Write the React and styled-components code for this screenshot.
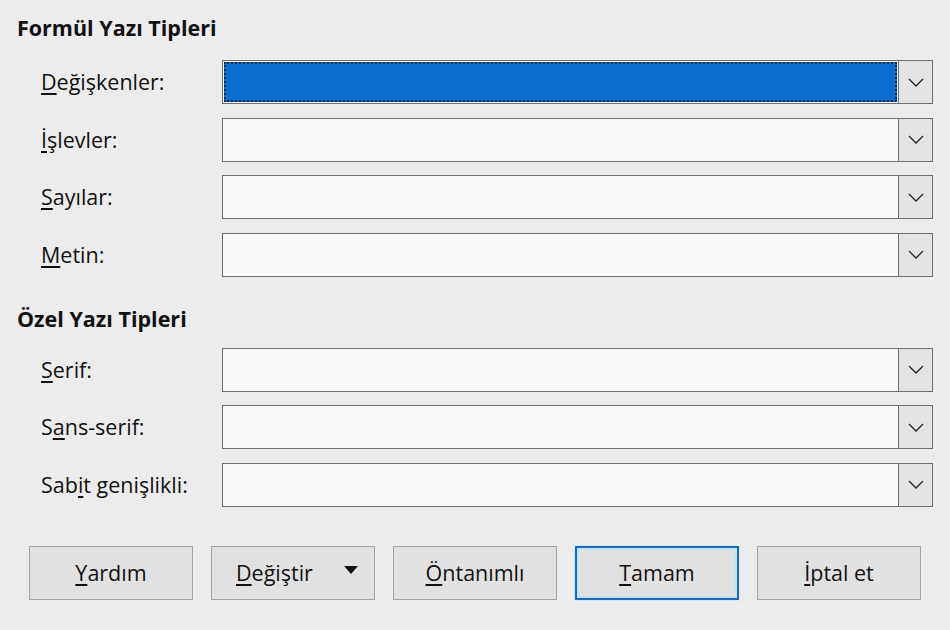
import React from "react";
import styled, { createGlobalStyle } from "styled-components";

const GlobalStyle = createGlobalStyle`
  html, body {
    margin: 0;
    padding: 0;
    background: #ececec;
  }
  body {
    font-family: "Open Sans", "Noto Sans", sans-serif;
    color: #111;
  }
`;

const formulFields = [
  { pre: "", key: "D", post: "eğişkenler:", focused: true },
  { pre: "", key: "İ", post: "şlevler:" },
  { pre: "", key: "S", post: "ayılar:" },
  { pre: "", key: "M", post: "etin:" },
];

const customFields = [
  { pre: "", key: "S", post: "erif:" },
  { pre: "S", key: "a", post: "ns-serif:" },
  { pre: "Sab", key: "i", post: "t genişlikli:" },
];

const buttons = [
  { pre: "", key: "Y", post: "ardım" },
  { pre: "", key: "D", post: "eğiştir", menu: true },
  { pre: "", key: "Ö", post: "ntanımlı" },
  { pre: "", key: "T", post: "amam", primary: true },
  { pre: "", key: "İ", post: "ptal et" },
];

const Mnemonic = ({ item }) => (
  <>
    {item.pre}
    <u>{item.key}</u>
    {item.post}
  </>
);

const Chevron = () => (
  <svg width="16" height="9" viewBox="0 0 16 9">
    <path d="M1 1 L8 8 L15 1" fill="none" stroke="#222" strokeWidth="1.3" />
  </svg>
);

const Section = ({ title, fields, gap }) => (
  <Group>
    <Heading $gap={gap}>{title}</Heading>
    <Rows>
      {fields.map((f, i) => (
        <Row key={i}>
          <Label>
            <Mnemonic item={f} />
          </Label>
          <Combo>
            <Field $focused={f.focused} />
            <DropButton>
              <Chevron />
            </DropButton>
          </Combo>
        </Row>
      ))}
    </Rows>
  </Group>
);

const App = () => {
  return (
    <>
      <GlobalStyle />
      <Dialog>
        <Section title="Formül Yazı Tipleri" fields={formulFields} gap={18} />
        <Section title="Özel Yazı Tipleri" fields={customFields} gap={15} />
        <ButtonBar>
          {buttons.map((b, i) => (
            <Button key={i} $primary={b.primary} $menu={b.menu}>
              <span>
                <Mnemonic item={b} />
              </span>
              {b.menu && <MenuArrow />}
            </Button>
          ))}
        </ButtonBar>
      </Dialog>
    </>
  );
};

export default App;

const Dialog = styled.div`
  width: 950px;
  height: 630px;
  box-sizing: border-box;
  padding: 14px 17px 0 17px;
  background: #ececec;
  display: flex;
  flex-direction: column;
`;

const Group = styled.div`
  display: flex;
  flex-direction: column;
  & + & {
    margin-top: 28px;
  }
`;

const Heading = styled.div`
  font-size: 21.5px;
  font-weight: 700;
  line-height: 28px;
  letter-spacing: 0;
  margin-bottom: ${(p) => p.$gap}px;
`;

const Rows = styled.div`
  display: flex;
  flex-direction: column;
  gap: 13.5px;
`;

const Row = styled.div`
  display: grid;
  grid-template-columns: 205px 1fr;
  align-items: center;
`;

const Label = styled.div`
  padding-left: 24px;
  font-size: 21.5px;
  line-height: 28px;
  white-space: nowrap;
  u {
    text-underline-offset: 3px;
  }
`;

const Combo = styled.div`
  height: 44px;
  display: flex;
  box-sizing: border-box;
  border: 1.5px solid #6e6e6e;
  background: #fafafa;
`;

const Field = styled.div`
  flex: 1;
  margin: 1px;
  box-sizing: border-box;
  background: ${(p) => (p.$focused ? "#0a6fd1" : "#fafafa")};
  border: ${(p) => (p.$focused ? "2px dotted #14263c" : "none")};
`;

const DropButton = styled.div`
  width: 33px;
  display: flex;
  align-items: center;
  justify-content: center;
  background: #e4e4e4;
  border-left: 1.5px solid #6e6e6e;
`;

const ButtonBar = styled.div`
  display: flex;
  gap: 18px;
  padding-left: 12px;
  margin-top: 39px;
`;

const Button = styled.div`
  width: 164px;
  height: 54px;
  box-sizing: border-box;
  display: flex;
  align-items: center;
  justify-content: ${(p) => (p.$menu ? "space-between" : "center")};
  padding: ${(p) => (p.$menu ? "0 16px 0 24px" : "0")};
  font-size: 21.5px;
  background: #e1e1e1;
  border: ${(p) => (p.$primary ? "2px solid #1f69b8" : "1.5px solid #a3a3a3")};
  box-shadow: ${(p) =>
    p.$primary ? "inset 0 0 0 2px #bfe3f7, 0 0 0 1px #cde9f8" : "none"};
  u {
    text-underline-offset: 3px;
  }
`;

const MenuArrow = styled.span`
  width: 0;
  height: 0;
  border-left: 7px solid transparent;
  border-right: 7px solid transparent;
  border-top: 8px solid #111;
  margin-bottom: 6px;
`;
